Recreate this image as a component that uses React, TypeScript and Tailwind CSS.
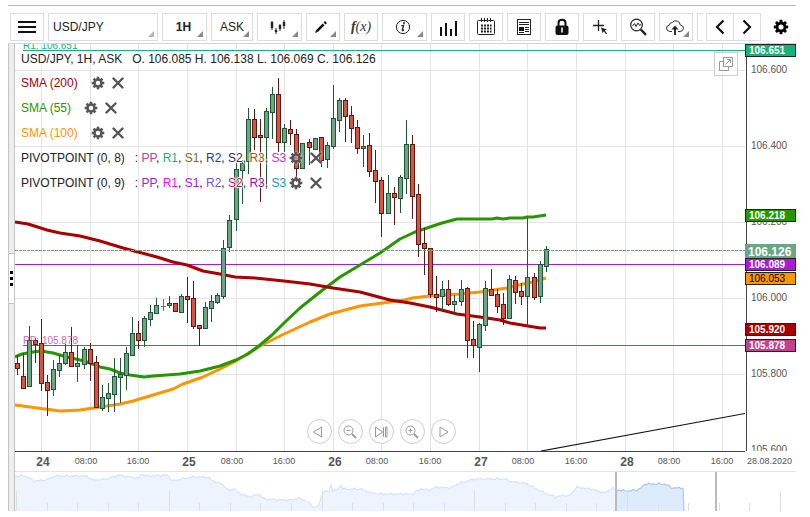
import { useState } from "react";
import type { ReactNode } from "react";

// Tamaño lógico del área del gráfico
const PLOT_W = 730;
const PLOT_H = 407;

// [máximo, techo del cuerpo, base del cuerpo, mínimo, dirección]
type Candle = [number, number, number, number, "u" | "d" | "n"];

const candles: Candle[] = [
  [311, 319, 325, 331, "d"], [309, 332, 345, 345, "d"], [282, 296, 343, 343, "u"], [294, 296, 301, 319, "d"],
  [275, 299, 340, 347, "d"], [331, 338, 347, 372, "d"], [316, 325, 346, 352, "u"], [311, 319, 327, 333, "u"],
  [300, 308, 320, 321, "u"], [283, 308, 323, 323, "d"], [301, 319, 323, 338, "u"], [303, 305, 321, 325, "u"],
  [299, 305, 320, 337, "d"], [312, 318, 364, 364, "d"], [341, 353, 365, 367, "u"], [339, 349, 355, 368, "u"],
  [314, 332, 351, 368, "u"], [314, 330, 334, 359, "u"], [303, 309, 332, 346, "u"], [273, 289, 312, 312, "u"],
  [277, 289, 297, 305, "d"], [272, 274, 297, 303, "u"], [261, 268, 276, 282, "u"], [254, 261, 270, 270, "u"],
  [255, 262, 263, 267, "n"], [252, 259, 262, 264, "u"], [259, 259, 268, 268, "d"], [250, 252, 269, 269, "u"],
  [233, 252, 256, 279, "d"], [237, 254, 283, 285, "d"], [281, 281, 285, 302, "d"], [258, 263, 285, 285, "u"],
  [251, 257, 265, 278, "u"], [249, 251, 259, 260, "u"], [196, 204, 253, 255, "u"], [171, 176, 204, 208, "u"],
  [119, 125, 176, 187, "u"], [116, 119, 127, 160, "u"], [64, 75, 118, 130, "u"], [65, 75, 94, 106, "d"],
  [75, 91, 94, 158, "d"], [64, 67, 94, 145, "u"], [43, 50, 69, 95, "u"], [34, 50, 99, 108, "d"],
  [80, 84, 99, 108, "u"], [76, 85, 90, 101, "d"], [85, 90, 125, 138, "d"], [99, 99, 125, 125, "u"],
  [95, 98, 104, 121, "d"], [94, 94, 106, 106, "u"], [93, 93, 117, 123, "d"], [98, 101, 116, 124, "u"],
  [41, 74, 103, 105, "u"], [54, 56, 77, 88, "u"], [54, 56, 73, 98, "d"], [62, 71, 85, 99, "d"],
  [76, 83, 105, 110, "d"], [91, 102, 105, 123, "u"], [89, 101, 128, 133, "d"], [106, 126, 138, 159, "d"],
  [133, 136, 170, 193, "d"], [131, 149, 170, 170, "u"], [143, 149, 154, 181, "d"], [131, 133, 155, 169, "u"],
  [76, 100, 135, 150, "u"], [91, 100, 153, 175, "d"], [140, 150, 201, 213, "d"], [184, 199, 205, 231, "d"],
  [204, 204, 251, 254, "d"], [232, 250, 254, 268, "d"], [237, 245, 253, 268, "u"], [236, 245, 261, 262, "d"],
  [251, 257, 261, 269, "u"], [236, 245, 258, 262, "u"], [243, 244, 297, 314, "d"], [277, 295, 302, 314, "d"],
  [279, 280, 304, 328, "u"], [237, 244, 282, 287, "u"], [225, 245, 252, 252, "d"], [245, 250, 263, 269, "d"],
  [249, 260, 275, 281, "d"], [231, 235, 275, 275, "u"], [232, 236, 249, 260, "d"], [239, 247, 253, 261, "d"],
  [174, 233, 253, 282, "u"], [229, 233, 254, 256, "d"], [217, 220, 253, 259, "u"], [202, 205, 223, 228, "u"],
];

const sma200 =
  "0,178 13,180 32,186 45,189 65,192 85,197 108,204 123,208 142,213 158,218 172,221 188,227 205,230 220,233 240,234 269,237 295,240 318,244 345,248 375,256 395,259 415,263 442,270 465,273 485,276 495,279 513,282 525,284 531,284";
const sma55 =
  "0,313 7,310 18,308 26,307 38,309 52,313 65,316 75,319 85,323 95,325 105,329 115,331 129,333 138,332 165,330 185,327 205,322 221,316 233,310 245,301 257,291 269,279 285,264 305,248 325,233 345,221 365,209 385,195 400,188 412,184 427,179 442,175 477,175 482,174 488,175 495,174 508,174 512,173 518,173 531,171";
const sma100 =
  "0,361 15,363 45,367 65,366 85,363 105,360 118,357 138,351 158,345 168,340 188,333 205,325 221,317 235,308 247,301 269,290 295,278 315,270 345,262 375,258 390,256 397,254 415,252 445,250 455,249 465,248 478,246 492,244 508,240 518,238 531,234";

const gridX = [26, 75, 123, 172, 221, 269, 318, 366, 415, 464, 512, 561, 610, 658, 707];

const priceLabels = [
  { y: 26, text: "106.600" },
  { y: 102, text: "106.400" },
  { y: 178, text: "106.200" },
  { y: 254, text: "106.000" },
  { y: 330, text: "105.800" },
  { y: 406, text: "105.600" },
];

const priceTags = [
  { y: 6, text: "106.651", style: "h-[13px] border border-[#222] bg-[#14b478] text-[10px] font-bold text-white" },
  { y: 171, text: "106.218", style: "h-[13px] border border-[#222] bg-[#289600] text-[10px] font-bold text-white" },
  { y: 206, text: "106.126", style: "h-[15px] bg-[#6ba583] text-xs font-bold text-white" },
  { y: 220, text: "106.089", style: "h-[13px] border border-[#222] bg-[#a51dd2] text-[10px] font-bold text-white" },
  { y: 234, text: "106.053", style: "h-[13px] border border-[#222] bg-[#ff9500] text-[10px] text-black" },
  { y: 285, text: "105.920", style: "h-[13px] border border-[#222] bg-[#a80000] text-[10px] font-bold text-white" },
  { y: 301, text: "105.878", style: "h-[13px] border border-[#222] bg-[#c2408c] text-[10px] font-bold text-white" },
];

const timeLabels = [
  { x: 28, text: "24" }, { x: 71, text: "08:00" }, { x: 123, text: "16:00" },
  { x: 174, text: "25" }, { x: 217, text: "08:00" }, { x: 269, text: "16:00" },
  { x: 320, text: "26" }, { x: 362, text: "08:00" }, { x: 415, text: "16:00" },
  { x: 466, text: "27" }, { x: 508, text: "08:00" }, { x: 561, text: "16:00" },
  { x: 612, text: "28" }, { x: 654, text: "08:00" }, { x: 707, text: "16:00" },
];

const navPoints = [
  [0, 4], [10, 4], [19, 9], [31, 8], [40, 4], [71, 4], [78, 8], [92, 7], [103, 3], [122, 6], [124, 6], [125, 1], [127, 3],
  [135, 4], [153, 3], [157, 9], [171, 6], [179, 5], [193, 5], [198, 9], [207, 12], [214, 19], [219, 16], [223, 21],
  [235, 25], [244, 22], [249, 27], [265, 28], [277, 28], [283, 26], [290, 28], [297, 34], [301, 36], [305, 31],
  [307, 20], [314, 19], [316, 13], [318, 19], [323, 17], [326, 13], [328, 17], [346, 17], [356, 21], [370, 22],
  [378, 22], [398, 22], [405, 17], [415, 18], [421, 15], [435, 16], [445, 11], [460, 7], [490, 7], [498, 10],
  [510, 11], [525, 19], [540, 25], [550, 23], [553, 25], [562, 15], [575, 17], [590, 21], [597, 16], [601, 18],
  [615, 19], [625, 17], [630, 12], [650, 12], [657, 16], [669, 16],
];

// Interpola la serie y le añade una pequeña oscilación
function navLine(from: number, to: number) {
  const out: string[] = [];
  for (let x = from; x <= to; x += 2) {
    const n = Math.max(1, navPoints.findIndex((p) => p[0] >= x));
    const [x0, y0] = navPoints[n - 1];
    const [x1, y1] = navPoints[n];
    const y = y0 + ((y1 - y0) * (x - x0)) / (x1 - x0);
    out.push(`${x},${(y + Math.sin(x * 1.9) * 0.7 + Math.sin(x * 0.7) * 0.5).toFixed(1)}`);
  }
  return out.join(" ");
}

const strokes = {
  u: { line: "#225437", fill: "#6ba583" },
  d: { line: "#5b1a13", fill: "#d75442" },
  n: { line: "#737375", fill: "#737375" },
};

function Gear({ className }: { className: string }) {
  return (
    <svg viewBox="0 0 18 18" className={className} fill="none" stroke="currentColor">
      <circle cx="9" cy="9" r="4.5" strokeWidth="3.2" />
      {[0, 45, 90, 135, 180, 225, 270, 315].map((a) => (
        <path key={a} d="M9 4V0.9" strokeWidth="3.2" transform={`rotate(${a} 9 9)`} />
      ))}
    </svg>
  );
}

function Corner({ light }: { light?: boolean }) {
  return (
    <svg viewBox="0 0 6 6" className="pointer-events-none absolute right-[3px] bottom-[3px] h-[6px] w-[6px]">
      <path d="M6 0V6H0Z" fill={light ? "#b4b4b4" : "#888"} />
    </svg>
  );
}

interface ToolProps {
  label: string;
  wide?: boolean;
  corner?: boolean;
  children?: ReactNode;
}

function Tool({ label, wide, corner, children }: ToolProps) {
  return (
    <button
      aria-label={label}
      className={`relative flex h-7 shrink-0 items-center justify-center border border-[#ddd] bg-white ${wide ? "w-[45px]" : "w-[34px]"}`}
    >
      {children}
      {corner && <Corner />}
    </button>
  );
}

interface PickerProps {
  label: string;
  options: string[];
  box: string;
  text: string;
  light?: boolean;
}

function Picker({ label, options, box, text, light }: PickerProps) {
  const [value, setValue] = useState(options[0]);
  return (
    <label className={`relative block h-7 shrink-0 border border-[#ddd] bg-white ${box}`}>
      <select
        aria-label={label}
        value={value}
        onChange={(e) => setValue(e.target.value)}
        className={`h-full w-full appearance-none bg-transparent text-xs text-[#222] outline-none ${text}`}
      >
        {options.map((o) => (
          <option key={o}>{o}</option>
        ))}
      </select>
      <Corner light={light} />
    </label>
  );
}

function Toolbar() {
  return (
    <div className="flex border-t border-b border-t-[#bbb] border-b-[#d5d5d5] pt-[7px] pb-[2px]">
      <div className="flex min-w-0 flex-1 gap-1 overflow-hidden pl-[2px]">
        <Tool label="Menu">
          <svg viewBox="0 0 18 14" className="h-[14px] w-[18px]">
            <path d="M0 2H18M0 7H18M0 12H18" stroke="#111" strokeWidth="2" />
          </svg>
        </Tool>
        <Picker label="Instrument" options={["USD/JPY", "EUR/USD"]} box="w-[110px]" text="pl-1" light />
        <Picker label="Period" options={["1H", "4H", "1D"]} box="w-[45px]" text="pr-[2px] text-center font-bold" />
        <Picker label="Side" options={["ASK", "BID"]} box="w-[42px]" text="text-center" />
        <Tool label="Chart type" wide corner>
          <svg viewBox="0 0 18 16" className="mr-1 h-4 w-[18px]" stroke="#222" fill="none">
            <path d="M3 2V11M7 9V15M11 5V12M15 1V10" strokeWidth="1" />
            <path d="M3 3V9M15 3V7M7 11V13M11 6V10" strokeWidth="2.4" />
          </svg>
        </Tool>
        <Tool label="Draw" corner>
          <svg viewBox="0 0 14 14" className="mr-1 h-[14px] w-[14px]">
            <path d="M1 13L2.2 9.8L4.2 11.8Z" fill="#111" />
            <path d="M3.2 10.8L9.6 4.4M10.5 3.5L12 2" stroke="#111" strokeWidth="2.6" />
          </svg>
        </Tool>
        <Tool label="Functions">
          <span className="font-['Liberation_Serif',serif] text-sm italic leading-4 text-[#333]">
            <b>f</b>(x)
          </span>
        </Tool>
        <Tool label="Info" wide corner>
          <svg viewBox="0 0 16 16" className="mr-1 h-4 w-4">
            <circle cx="8" cy="8" r="6.6" fill="none" stroke="#222" />
            <path d="M6.4 6.8L8.6 6.3L7.3 11.2Q7.3 12 9 10.9" fill="none" stroke="#222" strokeWidth="1.3" />
            <circle cx="9" cy="4.1" r="1" fill="#222" />
          </svg>
        </Tool>
        <Tool label="Volume">
          <svg viewBox="0 0 18 18" className="mt-[2px] h-[18px] w-[18px]">
            <path d="M2 17V8M7 17V4M12 17V10M17 17V2" stroke="#111" strokeWidth="2" />
          </svg>
        </Tool>
        <Tool label="Calendar">
          <svg viewBox="0 0 18 18" className="h-[18px] w-[18px]" fill="none" stroke="#222">
            <rect x="0.5" y="2.5" width="17" height="14" rx="1" />
            <path d="M4.5 0V4M7.5 0V4M10.5 0V4M13.5 0V4" />
            <path d="M4 7.5H14.5M4 10.5H14.5M4 13.5H14.5" strokeWidth="2" strokeDasharray="2 1" />
          </svg>
        </Tool>
        <Tool label="News">
          <svg viewBox="0 0 14 16" className="h-4 w-[14px]" fill="none" stroke="#222">
            <rect x="0.5" y="0.5" width="13" height="15" />
            <path d="M2 3.5H12M2 5.5H12M8 8.5H12M8 10.5H12M8 12.5H12M2 13.5H7" />
            <rect x="2" y="8" width="5" height="4" fill="#111" stroke="none" />
          </svg>
        </Tool>
        <Tool label="Lock">
          <svg viewBox="0 0 14 18" className="h-[18px] w-[14px]">
            <path d="M3.5 8V5Q3.5 1.8 7 1.8Q10.5 1.8 10.5 5V8" fill="none" stroke="#111" strokeWidth="2" />
            <rect x="0.5" y="7.5" width="13" height="9.5" rx="2" fill="#111" />
            <path d="M7 9.5V14.5" stroke="#fff" strokeWidth="1.6" />
          </svg>
        </Tool>
        <Tool label="Crosshair">
          <svg viewBox="0 0 16 16" className="h-4 w-4">
            <path d="M6.5 1V12M1 6.5H12" stroke="#222" strokeWidth="1.3" />
            <path d="M9 8.5L15 10.5L12.8 11.5L15 14.5L14 15.2L11.8 12.3L10.6 14.2Z" fill="#222" />
          </svg>
        </Tool>
        <Tool label="Inspect">
          <svg viewBox="0 0 18 18" className="h-[18px] w-[18px]" fill="none" stroke="#222">
            <circle cx="7.5" cy="7" r="5.8" strokeWidth="1.2" />
            <path d="M3.5 8L5.5 5.5L7 8.5L9 5L10.5 7.5L12 6.5" />
            <path d="M11.8 11.5L17 16.8" strokeWidth="2.4" />
          </svg>
        </Tool>
        <Tool label="Upload" corner>
          <svg viewBox="0 0 20 18" className="mr-[2px] h-[18px] w-5" fill="none" stroke="#333">
            <path d="M7 13.5H5Q1.5 13 1.5 10Q1.5 7.5 4.5 7Q4.5 4.5 7.5 4.5Q9 2 12 3Q15 3.5 15.3 7Q18.5 7.5 18.5 10.3Q18.2 13.3 15 13.5H13" />
            <path d="M10 17V9.5" strokeWidth="2" />
            <path d="M6.5 11.5L10 7.5L13.5 11.5Z" fill="#222" stroke="none" />
          </svg>
        </Tool>
        <Tool label="More" />
      </div>
      <div className="ml-[3px] flex">
        <button aria-label="Previous" className="flex h-7 w-7 items-center justify-center border border-[#ddd]">
          <svg viewBox="0 0 10 16" className="h-4 w-[10px]">
            <path d="M8.5 1.5L2 8L8.5 14.5" fill="none" stroke="#111" strokeWidth="2.2" />
          </svg>
        </button>
        <button aria-label="Next" className="flex h-7 w-[27px] items-center justify-center border border-l-0 border-[#ddd]">
          <svg viewBox="0 0 10 16" className="h-4 w-[10px]">
            <path d="M1.5 1.5L8 8L1.5 14.5" fill="none" stroke="#111" strokeWidth="2.2" />
          </svg>
        </button>
        <button aria-label="Settings" className="mr-[7px] ml-[11px] flex h-7 w-[17px] items-center justify-center text-black">
          <Gear className="h-4 w-4" />
        </button>
      </div>
    </div>
  );
}

function LegendActions({ name }: { name: string }) {
  return (
    <span className="flex items-center gap-[7px] text-[#555]">
      <button aria-label={`${name} settings`}>
        <Gear className="block h-[14px] w-[14px] drop-shadow-[0_0_1px_white]" />
      </button>
      <button aria-label={`${name} remove`}>
        <svg viewBox="0 0 12 12" className="block h-3 w-3 drop-shadow-[0_0_1px_white]">
          <path d="M1.5 1.5L10.5 10.5M10.5 1.5L1.5 10.5" stroke="currentColor" strokeWidth="2.4" strokeLinecap="round" />
        </svg>
      </button>
    </span>
  );
}

const levels = ["PP", "R1", "S1", "R2", "S2", "R3", "S3"];

const pivots = [
  {
    name: "PIVOTPOINT (0, 8)",
    colors: ["text-[#c2408c]", "text-[#14b478]", "text-[#8c6428]", "text-[#283c9b]", "text-[#46284b]", "text-[#8c6414]", "text-[#d728c8]"],
  },
  {
    name: "PIVOTPOINT (0, 9)",
    colors: ["text-[#a51dd2]", "text-[#f014e6]", "text-[#a51dd2]", "text-[#7355d7]", "text-[#c8145a]", "text-[#960fa5]", "text-[#1e96b4]"],
  },
];

function Legend() {
  return (
    <div className="absolute top-[3px] left-[6px] text-xs text-[#222] [text-shadow:0_0_2px_#fff,1px_0_1px_#fff,-1px_0_1px_#fff,0_1px_1px_#fff,0_-1px_1px_#fff]">
      <div className="flex h-[23px] gap-[10px]">
        <span className="whitespace-nowrap leading-6">USD/JPY, 1H, ASK</span>
        <span className="whitespace-nowrap leading-6">O. 106.085 H. 106.138 L. 106.069 C. 106.126</span>
      </div>
      {[
        { name: "SMA (200)", color: "text-[#a80000]" },
        { name: "SMA (55)", color: "text-[#289600]" },
        { name: "SMA (100)", color: "text-[#ff9500]" },
      ].map((s) => (
        <div key={s.name} className="flex h-[25px] items-center gap-[13px]">
          <span className={s.color}>{s.name}</span>
          <LegendActions name={s.name} />
        </div>
      ))}
      {pivots.map((p) => (
        <div key={p.name} className="flex h-[25px] items-center gap-[3px] whitespace-nowrap">
          <span className="mr-[7px]">{p.name}</span>
          <span>
            :{" "}
            {levels.map((l, i) => (
              <span key={l}>
                <span className={p.colors[i]}>{l}</span>
                {i < levels.length - 1 && ", "}
              </span>
            ))}
          </span>
          <LegendActions name={p.name} />
        </div>
      ))}
    </div>
  );
}

function RoundButton({ label, children }: { label: string; children: ReactNode }) {
  return (
    <button aria-label={label} className="flex h-[25px] w-[25px] items-center justify-center rounded-full border border-[#ccc] bg-white/80">
      <svg viewBox="0 0 16 16" className="h-4 w-4" fill="none" stroke="#999">
        {children}
      </svg>
    </button>
  );
}

function Plot() {
  return (
    <div className="relative h-[407px] min-w-0 flex-1 overflow-hidden">
      <svg viewBox={`0 0 ${PLOT_W} ${PLOT_H}`} preserveAspectRatio="none" className="block h-full w-full">
        <g fill="#e4e4e4" shapeRendering="crispEdges">
          {gridX.map((x) => (
            <rect key={x} x={x} y="0" width="1" height={PLOT_H} />
          ))}
          {[26, 102, 178, 254, 330].map((y) => (
            <rect key={y} x="0" y={y} width={PLOT_W} height="1" />
          ))}
        </g>
        <path d="M526 407L730 369.5" stroke="#111" strokeWidth="1.2" />
        <g shapeRendering="crispEdges">
          <rect x="8" y="6" width="722" height="1" fill="#14b478" />
          <rect x="0" y="220" width="730" height="1" fill="#a51dd2" />
          <rect x="8" y="301" width="722" height="1" fill="#b0408a" />
        </g>
        <g fill="none" strokeWidth="3" strokeLinejoin="round">
          <polyline points={sma100} stroke="#ff9500" />
          <polyline points={sma55} stroke="#289600" />
          <polyline points={sma200} stroke="#a80000" />
        </g>
        <g shapeRendering="crispEdges">
          {candles.map(([high, top, bottom, low, dir], i) => {
            const x = 2 + Math.floor(i * 6.0811 + 0.1216);
            const c = strokes[dir];
            return (
              <g key={i}>
                <rect x={x} y={high} width="1" height={low - high} fill={c.line} />
                <rect x={x - 2} y={top} width="5" height={bottom - top} fill={c.line} />
                {bottom - top > 2 && <rect x={x - 1} y={top + 1} width="3" height={bottom - top - 2} fill={c.fill} />}
              </g>
            );
          })}
          <path d="M0 206.5H730" stroke="#6ba583" strokeDasharray="3 1" />
        </g>
      </svg>
      <span className="absolute -top-1 left-2 text-[10px] leading-3 text-[#14b478]">R1: 106.651</span>
      <span className="absolute top-[291px] left-2 text-[10px] leading-3 text-[#c2408c]/80">PP: 105.878</span>
      <Legend />
      <button aria-label="Pop out" className="absolute top-2 right-[7px] flex h-6 w-6 items-center justify-center border border-[#ccc] bg-white/60">
        <svg viewBox="0 0 14 14" className="h-[14px] w-[14px]" fill="none" stroke="#999">
          <path d="M4.5 4.5H0.5V13.5H9.5V9.5" />
          <rect x="4.5" y="0.5" width="9" height="9" />
          <path d="M6.5 7.5L11.3 2.7M8 2.5H11.5V6" />
        </svg>
      </button>
      <div className="absolute inset-x-0 bottom-[7px] flex justify-center gap-[6px] pl-[2px]">
        <RoundButton label="Scroll left">
          <path d="M10.5 3V13L2.5 8Z" />
        </RoundButton>
        <RoundButton label="Zoom out">
          <circle cx="6.5" cy="6.5" r="4.5" />
          <path d="M4.5 6.5H8.5" />
          <path d="M10 10L14 14" strokeWidth="1.8" />
        </RoundButton>
        <RoundButton label="Latest">
          <path d="M2.5 3V13L9.5 8ZM10.5 3V13M12.5 3H14V13H12.5Z" />
        </RoundButton>
        <RoundButton label="Zoom in">
          <circle cx="6.5" cy="6.5" r="4.5" />
          <path d="M4.5 6.5H8.5M6.5 4.5V8.5" />
          <path d="M10 10L14 14" strokeWidth="1.8" />
        </RoundButton>
        <RoundButton label="Scroll right">
          <path d="M5 3V13L13 8Z" />
        </RoundButton>
      </div>
    </div>
  );
}

function PriceAxis() {
  return (
    <div className="relative w-[51px] shrink-0 overflow-hidden pl-px">
      <div className="h-full border-l border-[#444]" />
      {priceLabels.map((p) => (
        <span key={p.text} className="absolute left-[6px] -mt-[6px] text-[10px] leading-3 text-[#555]" style={{ top: p.y }}>
          {p.text}
        </span>
      ))}
      {priceTags.map((p) => (
        <span
          key={p.text}
          className={`absolute inset-x-0 -mt-[6px] flex items-center pl-[3px] ${p.style}`}
          style={{ top: p.y }}
        >
          {p.text}
        </span>
      ))}
    </div>
  );
}

function TimeAxis() {
  return (
    <div className="flex h-5 text-[#555]">
      <div className="relative min-w-0 flex-1 border-t border-[#444]">
        {timeLabels.map((t) => (
          <span
            key={t.x}
            className={`absolute inset-y-0 flex -translate-x-1/2 items-center ${t.text.length === 2 ? "text-xs font-bold" : "text-[9px]"}`}
            style={{ left: `${(t.x / PLOT_W) * 100}%` }}
          >
            {t.text}
          </span>
        ))}
      </div>
      <div className="flex w-[51px] items-center pt-px pl-[2px] text-[9px]">28.08.2020</div>
    </div>
  );
}

function Navigator() {
  const past = navLine(0, 600);
  const current = navLine(600, 668);
  return (
    <div className="border-t border-[#e4e4e4]">
      <svg viewBox="0 0 781 39" preserveAspectRatio="none" className="block h-[39px] w-full">
        <polygon points={`0,39 ${past} 600,39`} fill="#edf4fe" />
        <polyline points={past} fill="none" stroke="#d5e4fc" strokeWidth="1.2" />
        <polygon points={`600,39 ${current} 669,39`} fill="#deebfd" />
        <polyline points={`${current} 669,39`} fill="none" stroke="#a9c9f8" strokeWidth="1.2" />
        <g fill="#dcdfe4" shapeRendering="crispEdges">
          {Array.from({ length: 26 }, (_, i) => (
            <rect key={i} x={Math.round(1 + i * 30.55)} y={i % 5 === 0 ? 19 : 31} width="1" height="20" />
          ))}
          <rect x="600" y="0" width="2" height="39" fill="#bbb" />
          <rect x="700" y="0" width="2" height="39" fill="#bbb" />
        </g>
      </svg>
    </div>
  );
}

export default function App() {
  return (
    <div className="bg-white pt-[5px] pr-[14px] pb-[6px] pl-2 font-['Liberation_Sans',Arial,sans-serif]">
      <Toolbar />
      <div className="flex">
        <div className="flex w-[7px] shrink-0 items-center border-x border-[#c4c4c4] bg-[#eee]">
          <button aria-label="Toggle panel" className="mt-[2px] flex h-[51px] w-full flex-col items-center justify-center gap-[3px] border-y border-[#c4c4c4] bg-white">
            <span className="h-[3px] w-[3px] bg-black" />
            <span className="h-[3px] w-[3px] bg-black" />
            <span className="h-[3px] w-[3px] bg-black" />
          </button>
        </div>
        <div className="min-w-0 flex-1">
          <div className="flex">
            <Plot />
            <PriceAxis />
          </div>
          <TimeAxis />
          <Navigator />
        </div>
      </div>
    </div>
  );
}
